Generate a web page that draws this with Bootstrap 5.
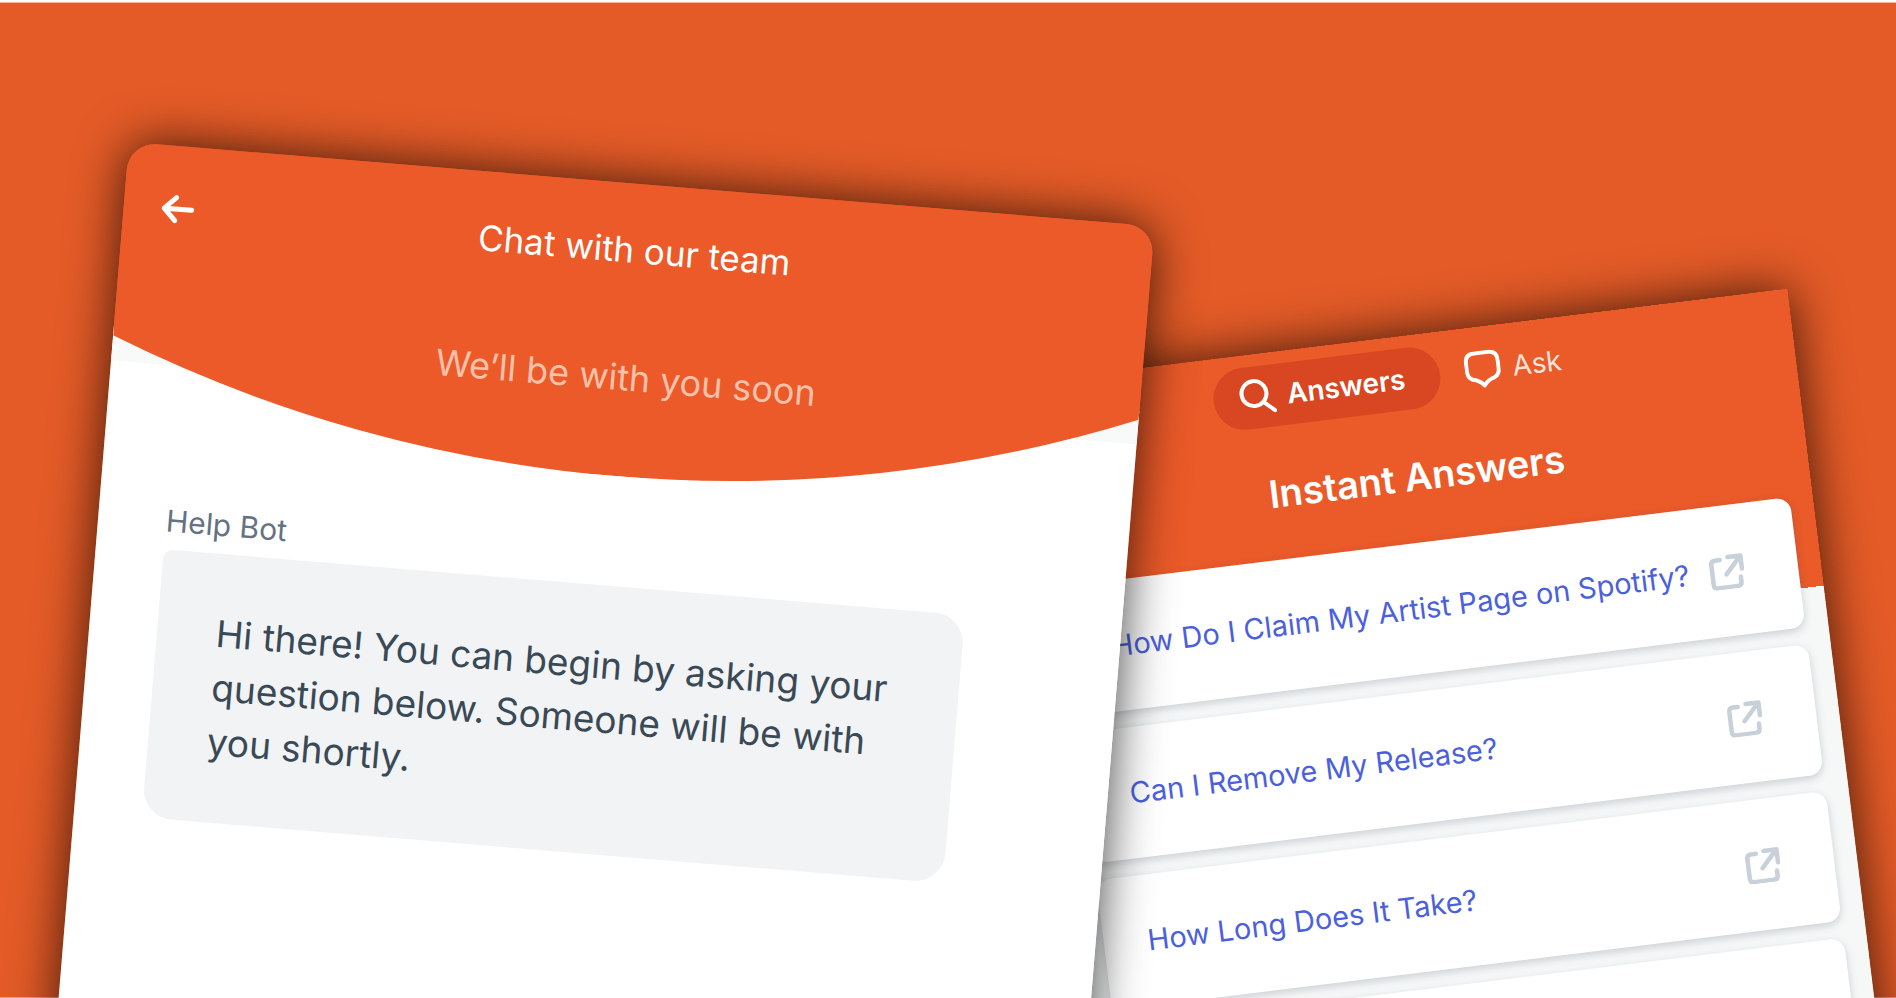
<!DOCTYPE html>
<html lang="en">
<head>
<meta charset="utf-8">
<meta name="viewport" content="width=device-width, initial-scale=1">
<title>Chat with our team</title>
<link href="https://cdn.jsdelivr.net/npm/bootstrap@5.3.0/dist/css/bootstrap.min.css" rel="stylesheet">
<style>
  body { font-family: Inter, "Liberation Sans", sans-serif; background: #e45b27; }
  .stage {
    display: grid;
    grid-template-columns: 129fr 883fr 146fr 635fr 103fr;
    height: 100vh;
    background: #e45b27;
    border-top: 2px solid #fff;
    box-shadow: inset 0 1px 0 #f3b8a0, inset 0 -1px 0 #f3a384;
  }
  .panel { min-height: 115vh; min-width: 0; grid-row: 1; transform-origin: 0 0; box-shadow: 0 0 50px rgba(0, 0, 0, .75); }

  /* chat panel */
  .chat-panel { grid-column: 2 / 4; margin-top: 140px; transform: rotate(4.7deg); z-index: 2; background: linear-gradient(#ed5a29 185px, #fff 185px); border-radius: 28px; }
  .chat-head { height: 293px; padding: 41px 32px 0; color: #fff; }
  .chat-curve { z-index: -1; height: 123px; }
  .back-btn { width: 44px; height: 44px; }
  .chat-title { font-size: 35px; line-height: 50px; font-weight: 400; }
  .chat-sub { font-size: 36px; line-height: 50px; margin-top: 78px; color: #f9c1aa; }
  .chat-body { padding: 62px 68px 0; }
  .bot-name { font-size: 30px; line-height: 38px; color: #647282; }
  .bubble { width: 90%; margin-top: 10px; padding: 53px 50px 54px 59px; background: #f1f3f5; color: #394956; border-radius: 10px 30px 30px 30px; font-size: 37px; line-height: 54px; }

  /* answers panel */
  .answers-panel { grid-column: 3 / 5; margin-top: 382px; transform: rotate(-7deg); z-index: 1; background: linear-gradient(#eb5a29 299px, #f6f8f8 299px); }
  .answers-head { height: 299px; padding-top: 12px; color: #fff; }
  .tab-btn { height: 62px; padding: 0 35px 0 25px; border: 0; border-radius: 31px; background: none; color: #fde3da; font-size: 28px; line-height: 34px; gap: 12px; }
  .tab-btn.active { background: #d84722; color: #fff; font-weight: 600; }
  .answers-title { font-size: 38px; line-height: 46px; font-weight: 600; margin-top: 44px; }
  .answer-list { margin-top: -92px; padding: 0 23px; gap: 17px; }
  .answer-item { height: 131px; padding: 0 53px 0 44px; background: #fff; border-radius: 14px; color: #4c5fdd; font-size: 29px; line-height: 34px; white-space: nowrap; box-shadow: 0 3px 8px rgba(50, 65, 80, .22); }
</style>
</head>
<body>
<svg class="d-none" aria-hidden="true">
  <symbol id="open-link" viewBox="0 0 36 36">
    <path d="M12 6H7Q3 6 3 10V30Q3 34 7 34H27Q31 34 31 30V25M20 4H33V17M32 5L17 21" fill="none" stroke="#c8d0d9" stroke-width="4.500" stroke-linecap="round" stroke-linejoin="round"/>
    <path d="M25 4H33V12Z" fill="#c8d0d9"/>
  </symbol>
</svg>
<main class="stage overflow-hidden">

  <section class="panel chat-panel">
    <header class="chat-head position-relative z-0">
      <svg class="chat-curve position-absolute bottom-0 start-0 w-100" viewBox="0 170 1029 123" preserveAspectRatio="none" aria-hidden="true">
        <rect y="190" width="1029" height="29" fill="#f8fafa"/>
        <path d="M0 170H1029V194A1384 1384 0 0 1 0 194Z" fill="#ed5a29"/>
      </svg>
      <div class="d-flex align-items-start">
        <button type="button" class="back-btn btn p-0 border-0 d-flex" aria-label="Back">
          <svg width="44" height="44" viewBox="0 0 44 44" fill="none" stroke="#fff" stroke-width="5" stroke-linecap="round" stroke-linejoin="round"><path d="M36 22H9M20 10.500L8.500 22L20 33.500"/></svg>
        </button>
        <h1 class="chat-title flex-fill text-center mb-0 pe-5">Chat with our team</h1>
      </div>
      <p class="chat-sub text-center mb-0">We’ll be with you soon</p>
    </header>
    <div class="chat-body">
      <div class="bot-name">Help Bot</div>
      <p class="bubble mb-0">Hi there! You can begin by asking your question below. Someone will be with you shortly.</p>
    </div>
  </section>

  <section class="panel answers-panel">
    <header class="answers-head">
      <nav class="d-flex justify-content-center">
        <button type="button" class="tab-btn active d-flex align-items-center">
          <svg width="37" height="38" viewBox="0 0 37 38" fill="none" stroke="#fff" stroke-width="4" stroke-linecap="round"><circle cx="16" cy="15" r="12.500"/><path d="M25 25L35 34"/></svg>
          Answers
        </button>
        <button type="button" class="tab-btn d-flex align-items-center">
          <svg width="36" height="38" viewBox="0 0 36 38" fill="none" stroke="#fff" stroke-width="4" stroke-linejoin="round"><path d="M11 2H25Q34 2 34 11V19Q34 26 29 28C25 29 21 31 18 35C15 31 11 29 7 28Q2 26 2 19V11Q2 2 11 2Z"/></svg>
          Ask
        </button>
      </nav>
      <h2 class="answers-title text-center mb-0">Instant Answers</h2>
    </header>
    <div class="answer-list d-flex flex-column position-relative">
      <a href="#" class="answer-item d-flex align-items-center justify-content-between text-decoration-none">How Do I Claim My Artist Page on Spotify?
        <svg class="flex-shrink-0" width="36" height="36"><use href="#open-link"/></svg></a>
      <a href="#" class="answer-item d-flex align-items-center justify-content-between text-decoration-none">Can I Remove My Release?
        <svg class="flex-shrink-0" width="36" height="36"><use href="#open-link"/></svg></a>
      <a href="#" class="answer-item d-flex align-items-center justify-content-between text-decoration-none">How Long Does It Take?
        <svg class="flex-shrink-0" width="36" height="36"><use href="#open-link"/></svg></a>
      <div class="answer-item"></div>
    </div>
  </section>

</main>
<script src="https://cdn.jsdelivr.net/npm/bootstrap@5.3.0/dist/js/bootstrap.bundle.min.js"></script>
</body>
</html>
